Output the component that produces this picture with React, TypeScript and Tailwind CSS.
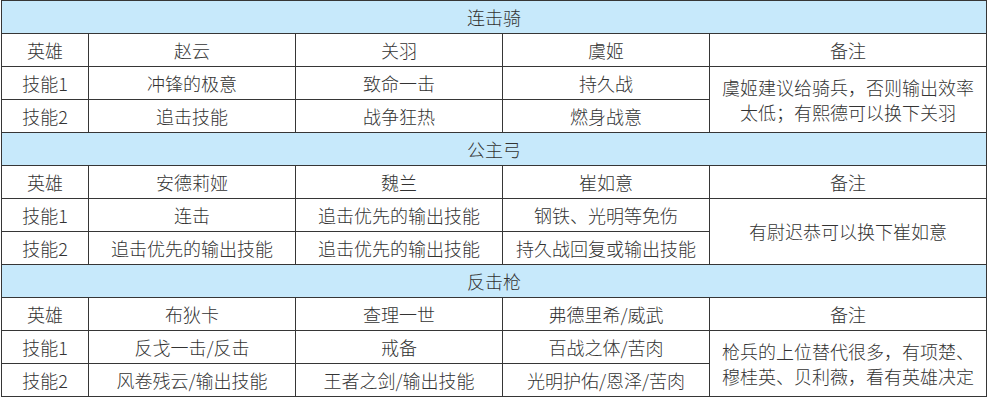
import React from "react";

type Section = {
  title: string;
  heroes: string[];
  skill1: string[];
  skill2: string[];
  note: React.ReactNode;
};

const sections: Section[] = [
  {
    title: "连击骑",
    heroes: ["赵云", "关羽", "虞姬"],
    skill1: ["冲锋的极意", "致命一击", "持久战"],
    skill2: ["追击技能", "战争狂热", "燃身战意"],
    note: (
      <>
        虞姬建议给骑兵，否则输出效率
        <br />
        太低；有熙德可以换下关羽
      </>
    ),
  },
  {
    title: "公主弓",
    heroes: ["安德莉娅", "魏兰", "崔如意"],
    skill1: ["连击", "追击优先的输出技能", "钢铁、光明等免伤"],
    skill2: ["追击优先的输出技能", "追击优先的输出技能", "持久战回复或输出技能"],
    note: "有尉迟恭可以换下崔如意",
  },
  {
    title: "反击枪",
    heroes: ["布狄卡", "查理一世", "弗德里希/威武"],
    skill1: ["反戈一击/反击", "戒备", "百战之体/苦肉"],
    skill2: ["风卷残云/输出技能", "王者之剑/输出技能", "光明护佑/恩泽/苦肉"],
    note: (
      <>
        枪兵的上位替代很多，有项楚、
        <br />
        穆桂英、贝利薇，看有英雄决定
      </>
    ),
  },
];

const cell = "border border-[#363636] h-[33px] p-0 text-center align-middle";

export default function App() {
  return (
    <div
      className="w-[987px] h-[400px] bg-white text-[#333333] overflow-hidden"
      style={{ fontFamily: '"Noto Sans CJK SC", "Noto Sans", sans-serif' }}
    >
      <table className="ml-px table-fixed border-collapse w-[985px] text-[18px] leading-[25px] font-light">
        <colgroup>
          <col className="w-[87px]" />
          <col className="w-[207px]" />
          <col className="w-[207px]" />
          <col className="w-[207px]" />
          <col className="w-[277px]" />
        </colgroup>
        <tbody>
          {sections.map((s) => (
            <React.Fragment key={s.title}>
              <tr>
                <td colSpan={5} className={`${cell} bg-[#c7e9fb]`}>
                  {s.title}
                </td>
              </tr>
              <tr>
                <td className={cell}>英雄</td>
                {s.heroes.map((h) => (
                  <td key={h} className={cell}>
                    {h}
                  </td>
                ))}
                <td className={cell}>备注</td>
              </tr>
              <tr>
                <td className={cell}>技能1</td>
                {s.skill1.map((t, i) => (
                  <td key={i} className={cell}>
                    {t}
                  </td>
                ))}
                <td rowSpan={2} className={`${cell} px-2`}>
                  {s.note}
                </td>
              </tr>
              <tr>
                <td className={cell}>技能2</td>
                {s.skill2.map((t, i) => (
                  <td key={i} className={cell}>
                    {t}
                  </td>
                ))}
              </tr>
            </React.Fragment>
          ))}
        </tbody>
      </table>
    </div>
  );
}
